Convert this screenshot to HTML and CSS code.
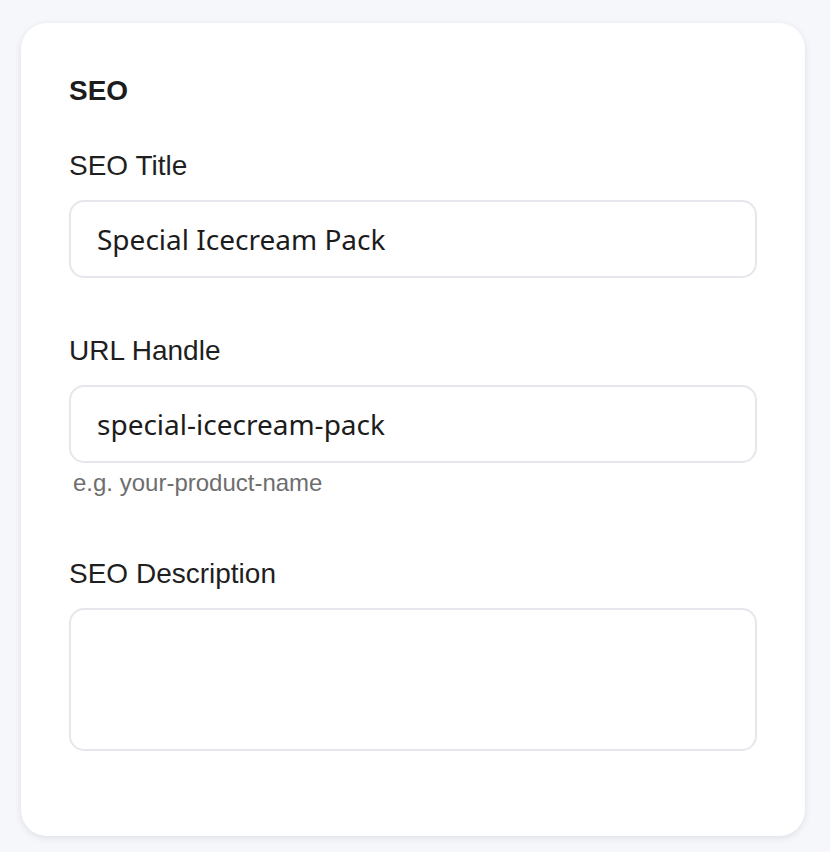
FILE: index.html
```html
<!DOCTYPE html>
<html lang="en">
<head>
<meta charset="utf-8">
<title>SEO</title>
<link rel="stylesheet" href="styles.css">
</head>
<body>
<section class="card">
  <h2 class="card-title">SEO</h2>
  <div class="field">
    <label class="field-label" for="seo-title">SEO Title</label>
    <input class="field-input" id="seo-title" type="text" value="Special Icecream Pack">
  </div>
  <div class="field field-url">
    <label class="field-label" for="url-handle">URL Handle</label>
    <input class="field-input" id="url-handle" type="text" value="special-icecream-pack">
    <p class="field-hint">e.g. your-product-name</p>
  </div>
  <div class="field field-desc">
    <label class="field-label" for="seo-desc">SEO Description</label>
    <textarea class="field-textarea" id="seo-desc"></textarea>
  </div>
</section>
</body>
</html>
```

FILE: styles.css
```css
html, body {
  margin: 0;
  padding: 0;
}
body {
  background: #f6f7fb;
  font-family: "Liberation Sans", Arial, sans-serif;
  color: #1f1f1f;
  padding: 23px 25px 17px 21px;
}
.card {
  width: 784px;
  box-sizing: border-box;
  background: #ffffff;
  border-radius: 26px;
  box-shadow: 0 2px 7px rgba(20, 20, 50, 0.1);
  padding: 52px 48px 85px 48px;
}
.card-title {
  margin: 0 0 43px 0;
  font-size: 28px;
  line-height: 32px;
  font-weight: 700;
  color: #1c1c1c;
}
.field {
  display: flex;
  flex-direction: column;
}
.field-url {
  margin-top: 57px;
}
.field-desc {
  margin-top: 61px;
}
.field-label {
  font-size: 28px;
  line-height: 32px;
  color: #1f1f1f;
  margin-bottom: 18px;
}
.field-input,
.field-textarea {
  box-sizing: border-box;
  width: 688px;
  margin: 0;
  border: 2px solid #e6e6ec;
  border-radius: 15px;
  background: #fff;
  font-family: "Noto Sans", "Open Sans", sans-serif;
  font-size: 28px;
  color: #1c1c1c;
  outline: none;
}
.field-input {
  height: 78px;
  padding: 0 26px;
}
.field-textarea {
  height: 143px;
  padding: 16px 26px;
  resize: none;
  display: block;
}
.field-hint {
  margin: 6px 0 0 4px;
  font-size: 24px;
  line-height: 28px;
  color: #6e6e6e;
}
```
